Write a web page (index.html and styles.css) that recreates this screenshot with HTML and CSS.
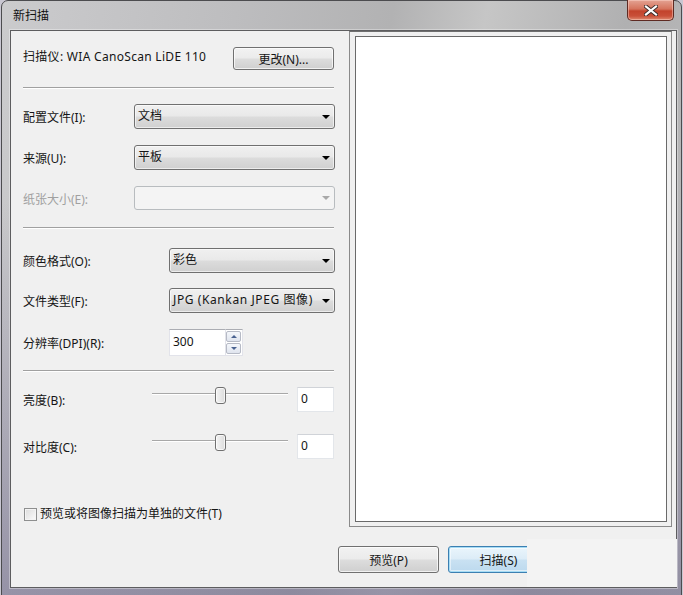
FILE: index.html
```html
<!DOCTYPE html>
<html lang="zh-CN">
<head>
<meta charset="utf-8">
<title>新扫描</title>
<link rel="stylesheet" href="styles.css">
</head>
<body>
<div class="window">
  <div class="titlebar">
    <span class="title">新扫描</span>
    <div class="close" aria-label="关闭">
      <svg width="14" height="11" viewBox="0 0 14 11"><path d="M2 1.5 L12 9.5 M12 1.5 L2 9.5" stroke="#3a2a28" stroke-width="4" stroke-linecap="square"/><path d="M2 1.5 L12 9.5 M12 1.5 L2 9.5" stroke="#ffffff" stroke-width="2.2" stroke-linecap="square"/></svg>
    </div>
  </div>
  <div class="client">
    <div class="main">
      <div class="left">
        <div class="scanner-row">
          <span class="scanner-label">扫描仪: WIA CanoScan LiDE 110</span>
          <div class="btn change">更改(N)...</div>
        </div>
        <div class="sep sep1"></div>
        <div class="field f1"><span class="lbl lbl-a">配置文件(I):</span><div class="combo combo-a"><span>文档</span><i class="arrow"></i></div></div>
        <div class="field f2"><span class="lbl lbl-a">来源(U):</span><div class="combo combo-a"><span>平板</span><i class="arrow"></i></div></div>
        <div class="field f3"><span class="lbl lbl-a disabled">纸张大小(E):</span><div class="combo combo-a combo-disabled"><span></span><i class="arrow"></i></div></div>
        <div class="sep sep2"></div>
        <div class="field f4"><span class="lbl lbl-b">颜色格式(O):</span><div class="combo combo-b"><span>彩色</span><i class="arrow"></i></div></div>
        <div class="field f5"><span class="lbl lbl-b">文件类型(F):</span><div class="combo combo-b"><span class="latin-wide">JPG (Kankan JPEG 图像)</span><i class="arrow"></i></div></div>
        <div class="field f6"><span class="lbl lbl-b">分辨率(DPI)(R):</span>
          <div class="spinner">
            <div class="spin-text">300</div>
            <div class="spin-btns">
              <div class="spin-btn"><i class="up"></i></div>
              <div class="spin-btn"><i class="down"></i></div>
            </div>
          </div>
        </div>
        <div class="sep sep3"></div>
        <div class="slider-row s1">
          <span class="lbl lbl-s">亮度(B):</span>
          <div class="slider"><div class="track"></div><div class="thumb"></div></div>
          <div class="numbox">0</div>
        </div>
        <div class="slider-row s2">
          <span class="lbl lbl-s">对比度(C):</span>
          <div class="slider"><div class="track"></div><div class="thumb"></div></div>
          <div class="numbox">0</div>
        </div>
        <div class="check-row">
          <span class="checkbox"></span>
          <span class="check-label">预览或将图像扫描为单独的文件(T)</span>
        </div>
      </div>
      <div class="preview"><div class="preview-inner"></div></div>
    </div>
    <div class="footer">
      <div class="btn footer-btn">预览(P)</div>
      <div class="btn footer-btn default">扫描(S)</div>
    </div>
    <div class="patch"></div>
  </div>
</div>
</body>
</html>
```

FILE: styles.css
```css
* { box-sizing: border-box; }
html, body { margin: 0; padding: 0; }
body {
  width: 683px;
  height: 595px;
  overflow: hidden;
  background: #c9c7d2;
  font-family: "Noto Sans", "Noto Sans CJK SC", sans-serif;
  font-size: 12px;
  color: #151515;
}
.window {
  position: relative;
  margin-left: 1px;
  width: 681px;
  height: 605px;
  border: 1px solid #4c4c4f;
  border-radius: 7px 7px 0 0;
  background:
    linear-gradient(to bottom, rgba(255,255,255,0) 0px, rgba(255,255,255,0) 40px, rgba(120,116,150,0.0) 200px, rgba(110,104,140,0.55) 600px),
    linear-gradient(100deg, #cbcbcd 0%, #bdbdbf 30%, #b2b2b3 50%, #c6c6c6 62%, #b0b0b1 80%, #bcbcbd 100%);
  padding: 29px 5px 0 8px;
}
.titlebar {
  position: absolute;
  left: 0; top: 0; right: 0;
  height: 29px;
}
.title {
  position: absolute;
  left: 11px;
  top: 6px;
  font-family: "Noto Sans CJK SC", sans-serif;
  font-size: 12px;
  line-height: 16px;
  color: #111;
}
.close {
  position: absolute;
  right: 7px;
  top: -1px;
  width: 47px;
  height: 21px;
  border: 1px solid #5e2a22;
  border-top: none;
  border-radius: 0 0 5px 5px;
  background: linear-gradient(to bottom, #e4a393 0%, #d5735c 45%, #c2432c 55%, #c94f38 80%, #de8a70 100%);
  box-shadow: inset 0 0 0 1px rgba(255,220,210,0.45);
  display: flex;
  align-items: center;
  justify-content: center;
}
.client {
  position: relative;
  width: 667px;
  height: 558px;
  border: 1px solid #5d5d5f;
  background: #f0f0f0;
  box-shadow: 0 0 0 1px rgba(255,255,255,0.35);
}
.main {
  display: flex;
  height: 496px;
}
.left {
  width: 338px;
  padding-left: 12px;
  display: flex;
  flex-direction: column;
}
.scanner-row {
  display: flex;
  align-items: center;
  margin-top: 16px;
  height: 23px;
}
.scanner-label {
  width: 210px;
  line-height: 16px;
  padding-bottom: 4px;
  white-space: nowrap;
  letter-spacing: 0.3px;
}
.latin-wide { letter-spacing: 0.6px; }
.btn {
  display: flex;
  align-items: center;
  justify-content: center;
  border: 1px solid #707070;
  border-radius: 3px;
  background: linear-gradient(to bottom, #f2f2f2 0%, #ebebeb 48%, #dddddd 52%, #cfcfcf 100%);
  box-shadow: inset 0 0 0 1px rgba(255,255,255,0.7);
  font-size: 12px;
  color: #151515;
}
.change {
  width: 101px;
  height: 23px;
}
.sep {
  width: 311px;
  height: 2px;
  border-top: 1px solid #a0a0a0;
  border-bottom: 1px solid #ffffff;
}
.sep1 { margin-top: 17px; }
.sep2 { margin-top: 17px; }
.sep3 { margin-top: 14px; }
.field {
  display: flex;
  align-items: center;
}
.f1 { margin-top: 15px; height: 25px; }
.f2 { margin-top: 16px; height: 25px; }
.f3 { margin-top: 16px; height: 24px; }
.f4 { margin-top: 19px; height: 25px; }
.f5 { margin-top: 15px; height: 25px; }
.f6 { margin-top: 16px; height: 27px; }
.lbl {
  line-height: 16px;
  padding-top: 3px;
  white-space: nowrap;
}
.lbl-a { width: 111px; }
.lbl-b { width: 146px; }
.disabled { color: #a0a0a0; }
.combo {
  position: relative;
  height: 100%;
  display: flex;
  align-items: center;
  padding-left: 3px;
  border: 1px solid #707070;
  border-radius: 3px;
  background: linear-gradient(to bottom, #f0f0f0 0%, #e9e9e9 48%, #dcdcdc 52%, #d0d0d0 100%);
  box-shadow: inset 0 0 0 1px rgba(255,255,255,0.6);
  line-height: 16px;
  white-space: nowrap;
}
.combo span { padding-bottom: 1px; }
.combo-a { width: 201px; }
.combo-b { width: 166px; }
.combo-disabled {
  border-color: #b8bcbf;
  background: #f4f4f4;
  box-shadow: none;
}
.arrow {
  position: absolute;
  right: 4px;
  top: 50%;
  margin-top: -2px;
  width: 0; height: 0;
  border-left: 4px solid transparent;
  border-right: 4px solid transparent;
  border-top: 4px solid #000;
}
.combo-disabled .arrow { border-top-color: #a8a8a8; }
.spinner {
  display: flex;
  height: 27px;
}
.spin-text {
  width: 57px;
  height: 27px;
  background: #fff;
  border: 1px solid #e2e3ea;
  border-top-color: #abadb3;
  padding-left: 3px;
  line-height: 24px;
}
.spin-btns {
  width: 17px;
  height: 27px;
  display: flex;
  flex-direction: column;
  background: #fff;
  border: 1px solid #e2e3ea;
  border-left: none;
  border-top-color: #abadb3;
  padding: 1px 1px 1px 0;
  gap: 1px;
}
.spin-btn {
  flex: 1;
  border: 1px solid #b6bac5;
  border-radius: 2px;
  background: linear-gradient(to bottom, #f5f7fb, #dfe4ee);
  display: flex;
  align-items: center;
  justify-content: center;
}
.spin-btn i {
  width: 0; height: 0;
  border-left: 3px solid transparent;
  border-right: 3px solid transparent;
}
.spin-btn .up { border-bottom: 3px solid #4a6290; }
.spin-btn .down { border-top: 3px solid #4a6290; }
.slider-row {
  display: flex;
  align-items: flex-start;
  height: 25px;
}
.s1 { margin-top: 15px; }
.s2 { margin-top: 22px; }
.lbl-s {
  width: 129px;
  padding-top: 6px;
}
.slider {
  position: relative;
  width: 136px;
  height: 25px;
}
.track {
  margin-top: 6px;
  height: 2px;
  border-top: 1px solid #a8a8a8;
  border-bottom: 1px solid #ffffff;
}
.thumb {
  position: absolute;
  left: 63px;
  top: 0;
  width: 11px;
  height: 17px;
  border: 1px solid #707070;
  border-radius: 3px 3px 3px 3px;
  background: linear-gradient(to right, #f4f4f4, #dcdcdc);
  box-shadow: inset 0 0 0 1px rgba(255,255,255,0.7);
}
.numbox {
  margin-left: 9px;
  width: 37px;
  height: 25px;
  background: #fff;
  border: 1px solid #e3e6ea;
  border-top-color: #d0d3d8;
  padding-left: 3px;
  line-height: 21px;
}
.check-row {
  display: flex;
  align-items: center;
  margin-top: 48px;
  height: 15px;
}
.checkbox {
  width: 13px;
  height: 13px;
  border: 1px solid #8e8f8f;
  background: linear-gradient(135deg, #dcdcdc, #fbfbfb);
  box-shadow: inset 0 0 0 1px #f4f4f4;
  margin-left: 1px;
}
.check-label {
  margin-left: 3px;
  line-height: 16px;
  padding-bottom: 1px;
  white-space: nowrap;
}
.preview {
  width: 323px;
  height: 496px;
  margin-left: 0;
  border: 1px solid #8a8a8a;
  border-top-color: #6f6f6f;
  padding: 4px 4px 4px 5px;
}
.preview-inner {
  width: 100%;
  height: 100%;
  background: #fff;
  border: 1px solid #6a6a6a;
}
.footer {
  display: flex;
  gap: 9px;
  padding-left: 327px;
  padding-top: 19px;
}
.footer-btn {
  width: 101px;
  height: 27px;
}
.default {
  border-color: #3c7fb1;
  background: linear-gradient(to bottom, #eaf5fc 0%, #dcecf7 48%, #c9e1f2 52%, #bcd9ee 100%);
  box-shadow: inset 0 0 0 1px #a6dcf5, inset 0 0 0 2px rgba(255,255,255,0.5);
}
.patch {
  position: absolute;
  left: 516px;
  top: 508px;
  width: 150px;
  height: 48px;
  background: #f3f3f3;
}
```
